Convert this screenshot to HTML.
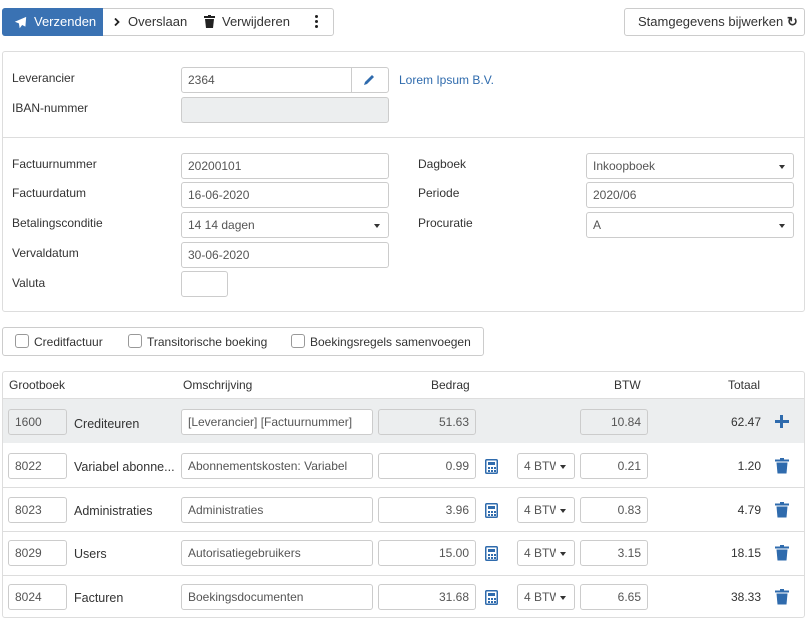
<!DOCTYPE html><html><head><style>
*{box-sizing:border-box;margin:0;padding:0}
body{width:810px;height:626px;background:#fff;font-family:"Liberation Sans",sans-serif;font-size:12px;color:#333;position:relative;overflow:hidden}
.a{position:absolute}
.in{position:absolute;border:1px solid #ccc;border-radius:3px;background:#fff;height:26px;line-height:24px;padding:0 6px;font-size:12px;color:#555;white-space:nowrap;overflow:hidden}
.dis{background:#eceeef}
.r{text-align:right}
.lbl{position:absolute;font-size:12px;color:#333}
.caret{position:absolute;right:8px;top:11px;width:0;height:0;border-left:3.5px solid transparent;border-right:3.5px solid transparent;border-top:4px solid #333}
.blue{color:#2f6bad}
.cb{position:absolute;width:14px;height:14px;border:1px solid #999;border-radius:3px;background:#fff}
.sel{padding-right:18px;background:#fff}
.sel span.t{display:block;width:32px;overflow:hidden}
</style></head><body>
<div class="a" style="left:2px;top:8px;width:332px;height:28px;border:1px solid #ccc;border-radius:3px"></div>
<div class="a" style="left:2px;top:8px;width:101px;height:28px;background:#3a72b3;border-radius:3px 0 0 3px;color:#fff;font-size:13px;line-height:28px">
<svg class="a" style="left:12px;top:8px" width="13" height="13" viewBox="0 0 16 16"><path d="M15 1L1 7l5 2 1 6 3-4 4 2z" fill="#fff"/></svg>
<span class="a" style="left:32px">Verzenden</span></div>
<svg class="a" style="left:114px;top:18px" width="6" height="8" viewBox="0 0 6 8"><path d="M1 0.5l3.5 3.5-3.5 3.5" fill="none" stroke="#222" stroke-width="1.8"/></svg>
<div class="a" style="left:128px;top:8px;line-height:28px;font-size:13px;color:#333">Overslaan</div>
<svg class="a" style="left:204px;top:15px" width="11" height="13" viewBox="0 0 11 13"><rect x="0" y="1" width="11" height="2" fill="#222"/><rect x="4" y="0" width="3" height="2" fill="#222"/><path d="M1 4h9l-1 9H2z" fill="#222"/></svg>
<div class="a" style="left:222px;top:8px;line-height:28px;font-size:13px;color:#333">Verwijderen</div>
<div class="a" style="left:315px;top:15px;width:3px;height:3px;background:#222;border-radius:50%;box-shadow:0 5px 0 #222,0 10px 0 #222"></div>
<div class="a" style="left:624px;top:8px;width:181px;height:28px;border:1px solid #ccc;border-radius:3px;line-height:26px;font-size:13px;padding-left:13px;color:#333">Stamgegevens bijwerken <span style="font-weight:bold;font-size:13px">&#x21BB;</span></div>

<div class="a" style="left:2px;top:51px;width:803px;height:261px;border:1px solid #ddd;border-radius:3px"></div>
<div class="a" style="left:3px;top:137px;width:801px;height:1px;background:#ddd"></div>
<div class="lbl" style="left:12px;top:71px">Leverancier</div>
<div class="in" style="left:181px;top:67px;width:208px">2364</div>
<div class="a" style="left:351px;top:67px;width:1px;height:26px;background:#ccc"></div>
<svg class="a" style="left:363px;top:73px" width="13" height="13" viewBox="0 0 13 13"><path d="M1 12l1-3 7-7 2 2-7 7z" fill="#2f6bad"/></svg>
<div class="lbl blue" style="left:399px;top:73px">Lorem Ipsum B.V.</div>
<div class="lbl" style="left:12px;top:101px">IBAN-nummer</div>
<div class="in dis" style="left:181px;top:97px;width:208px"></div>

<div class="lbl" style="left:12px;top:157px">Factuurnummer</div>
<div class="in" style="left:181px;top:153px;width:208px">20200101</div>
<div class="lbl" style="left:12px;top:186px">Factuurdatum</div>
<div class="in" style="left:181px;top:182px;width:208px">16-06-2020</div>
<div class="lbl" style="left:12px;top:216px">Betalingsconditie</div>
<div class="in" style="left:181px;top:212px;width:208px">14 14 dagen<span class="caret"></span></div>
<div class="lbl" style="left:12px;top:246px">Vervaldatum</div>
<div class="in" style="left:181px;top:242px;width:208px">30-06-2020</div>
<div class="lbl" style="left:12px;top:276px">Valuta</div>
<div class="in" style="left:181px;top:271px;width:47px"></div>
<div class="lbl" style="left:418px;top:157px">Dagboek</div>
<div class="in" style="left:586px;top:153px;width:208px">Inkoopboek<span class="caret"></span></div>
<div class="lbl" style="left:418px;top:186px">Periode</div>
<div class="in" style="left:586px;top:182px;width:208px">2020/06</div>
<div class="lbl" style="left:418px;top:216px">Procuratie</div>
<div class="in" style="left:586px;top:212px;width:208px">A<span class="caret"></span></div>

<div class="a" style="left:2px;top:327px;width:482px;height:29px;border:1px solid #ccc;border-radius:3px"></div>
<div class="cb" style="left:15px;top:334px"></div><div class="lbl" style="left:34px;top:335px">Creditfactuur</div>
<div class="cb" style="left:128px;top:334px"></div><div class="lbl" style="left:147px;top:335px">Transitorische boeking</div>
<div class="cb" style="left:291px;top:334px"></div><div class="lbl" style="left:310px;top:335px">Boekingsregels samenvoegen</div>

<div class="a" style="left:2px;top:371px;width:803px;height:247px;border:1px solid #ddd;border-radius:3px"></div>
<div class="a" style="left:3px;top:398px;width:801px;height:45px;background:#eceeef;border-top:1px solid #ddd"></div>
<div class="a" style="left:3px;top:487px;width:801px;height:1px;background:#ddd"></div>
<div class="a" style="left:3px;top:531px;width:801px;height:1px;background:#ddd"></div>
<div class="a" style="left:3px;top:575px;width:801px;height:1px;background:#ddd"></div>
<div class="lbl" style="left:9px;top:378px">Grootboek</div>
<div class="lbl" style="left:183px;top:378px">Omschrijving</div>
<div class="lbl" style="left:431px;top:378px">Bedrag</div>
<div class="lbl" style="left:614px;top:378px">BTW</div>
<div class="lbl" style="left:728px;top:378px">Totaal</div>

<div class="in dis" style="left:8px;top:409px;width:59px">1600</div>
<div class="lbl" style="left:74px;top:417px;font-size:12.5px">Crediteuren</div>
<div class="in" style="left:181px;top:409px;width:192px">[Leverancier] [Factuurnummer]</div>
<div class="in dis r" style="left:378px;top:409px;width:98px">51.63</div>
<div class="in dis r" style="left:580px;top:409px;width:68px">10.84</div>
<div class="lbl r" style="left:700px;top:415px;width:61px">62.47</div>
<div class="a" style="left:775px;top:420px;width:14px;height:3px;background:#2f6bad"></div>
<div class="a" style="left:780px;top:415px;width:3px;height:13px;background:#2f6bad"></div>

<div id="rows"></div>
<script>
var d=[["8022","Variabel abonne...","Abonnementskosten: Variabel","0.99","0.21","1.20",453],
["8023","Administraties","Administraties","3.96","0.83","4.79",497],
["8029","Users","Autorisatiegebruikers","15.00","3.15","18.15",540],
["8024","Facturen","Boekingsdocumenten","31.68","6.65","38.33",584]];
var h="";d.forEach(function(r){var t=r[6];
h+='<div class="in" style="left:8px;top:'+t+'px;width:59px">'+r[0]+'</div>'+
'<div class="lbl" style="left:74px;top:'+(t+7)+'px;font-size:12.5px">'+r[1]+'</div>'+
'<div class="in" style="left:181px;top:'+t+'px;width:192px">'+r[2]+'</div>'+
'<div class="in r" style="left:378px;top:'+t+'px;width:98px">'+r[3]+'</div>'+
'<svg class="a" style="left:485px;top:'+(t+6)+'px" width="13" height="15" viewBox="0 0 13 15"><rect x="0.75" y="0.75" width="11.5" height="13.5" rx="1" fill="none" stroke="#2f6bad" stroke-width="1.5"/><rect x="3" y="3" width="7" height="3" fill="#2f6bad"/><rect x="3" y="8" width="2" height="2" fill="#2f6bad"/><rect x="6" y="8" width="2" height="2" fill="#2f6bad"/><rect x="9" y="8" width="2" height="2" fill="#2f6bad"/><rect x="3" y="11" width="2" height="2" fill="#2f6bad"/><rect x="6" y="11" width="2" height="2" fill="#2f6bad"/><rect x="9" y="11" width="2" height="2" fill="#2f6bad"/></svg>'+
'<div class="in sel" style="left:517px;top:'+t+'px;width:58px"><span class="t">4 BTW</span><span class="caret"></span></div>'+
'<div class="in r" style="left:580px;top:'+t+'px;width:68px">'+r[4]+'</div>'+
'<div class="lbl r" style="left:700px;top:'+(t+6)+'px;width:61px">'+r[5]+'</div>'+
'<svg class="a" style="left:775px;top:'+(t+5)+'px" width="14" height="16" viewBox="0 0 14 16"><rect x="0" y="1.5" width="14" height="2" fill="#2f6bad"/><rect x="5" y="0" width="4" height="2" fill="#2f6bad"/><path d="M1.5 4.5h11l-1 11h-9z" fill="#2f6bad"/></svg>';});
document.getElementById("rows").innerHTML=h;
</script>
</body></html>
